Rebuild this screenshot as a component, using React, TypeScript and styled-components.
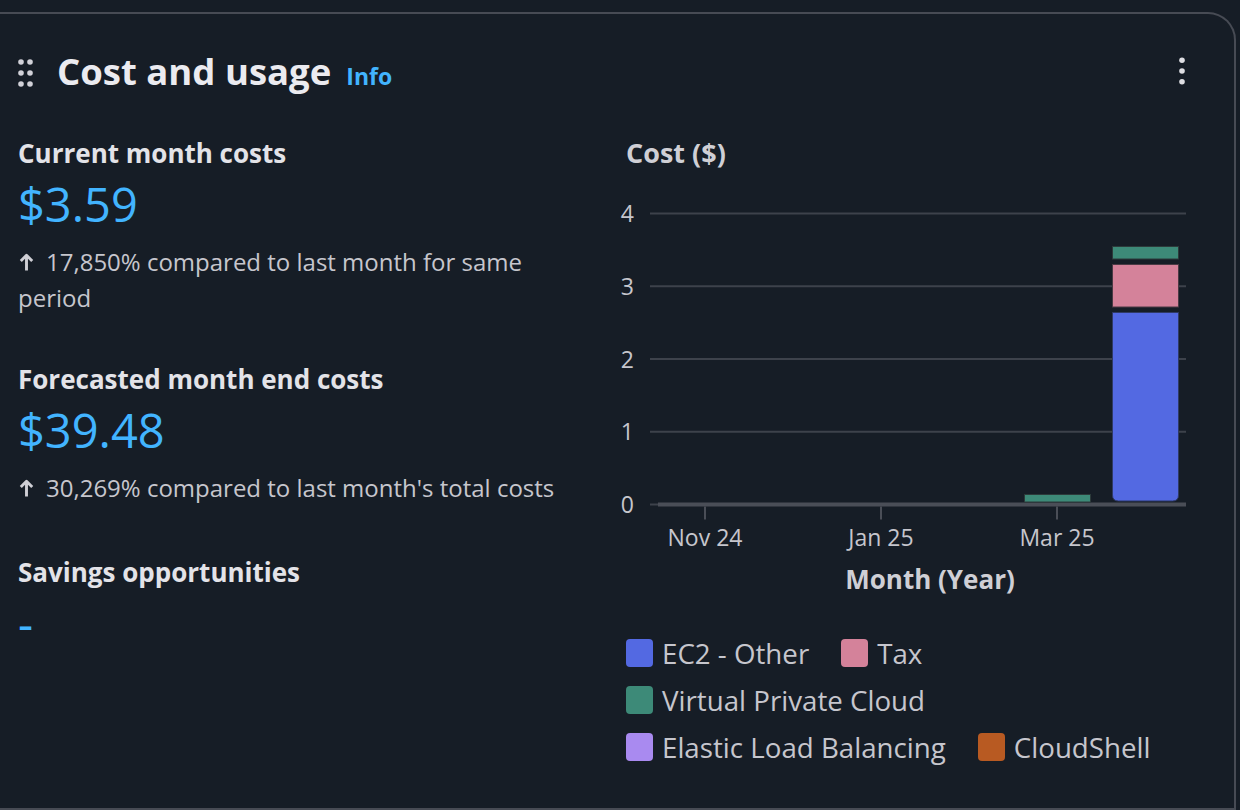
import React from 'react';
import styled, { createGlobalStyle } from 'styled-components';

const GlobalStyle = createGlobalStyle`
  html, body { margin: 0; padding: 0; background: #161d26; }
  body {
    width: 1240px;
    height: 810px;
    overflow: hidden;
    font-family: "Open Sans", "Noto Sans", sans-serif;
  }
  * { box-sizing: border-box; }
`;

const Card = styled.section`
  margin: 12px 4px 0 0;
  height: 798px;
  background: #161d26;
  border: 2px solid #474b54;
  border-left: none;
  border-top-right-radius: 28px;
  padding: 37px 42px 0 18px;
`;

const Header = styled.header`
  display: flex;
  align-items: center;
  justify-content: space-between;
  height: 44px;
`;

const HeaderLeft = styled.div`
  display: flex;
  align-items: center;
`;

const TitleRow = styled.div`
  display: flex;
  align-items: baseline;
  gap: 15px;
`;

const Title = styled.h2`
  margin: 0;
  font-size: 36.5px;
  line-height: 44px;
  font-weight: 700;
  color: #ebebf0;
`;

const InfoLink = styled.a`
  font-size: 23px;
  line-height: 44px;
  font-weight: 700;
  color: #42b4ff;
  text-decoration: none;
`;

const HandleIcon = styled.svg`
  display: block;
  margin: 0 23px 0 0;
  fill: #d1d1d8;
`;

const KebabIcon = styled.svg`
  display: block;
  margin-top: -4px;
  fill: #dedee3;
`;

const Content = styled.div`
  display: grid;
  grid-template-columns: 582px 1fr;
  margin-top: 42px;
`;

const Column = styled.div`
  display: flex;
  flex-direction: column;
`;

const Metric = styled.div<{ $gapTop: number }>`
  display: flex;
  flex-direction: column;
  margin-top: ${p => p.$gapTop}px;
`;

const KeyLabel = styled.div`
  font-size: 26px;
  line-height: 32px;
  font-weight: 700;
  color: #e3e3e8;
`;

const Value = styled.div`
  margin-top: 7px;
  font-size: 47px;
  line-height: 56px;
  font-weight: 400;
  color: #42b4ff;
`;

const Trend = styled.p`
  margin: 12px 0 0;
  font-size: 24px;
  line-height: 36px;
  color: #c6c6cd;
  max-width: 540px;
`;

const ArrowIcon = styled.svg`
  display: inline-block;
  vertical-align: baseline;
  margin: 0 12px 0 1px;
  stroke: #cfcfd5;
  fill: none;
`;

const ChartColumn = styled.div`
  display: flex;
  flex-direction: column;
`;

const ChartTitle = styled.div`
  padding-left: 26px;
  font-size: 27px;
  line-height: 32px;
  font-weight: 700;
  color: #cfcfd5;
`;

const ChartSvg = styled.svg`
  display: block;
  margin-top: 21px;
  text {
    font-family: "Open Sans", "Noto Sans", sans-serif;
    font-size: 23px;
    fill: #c6c6cd;
  }
`;

const AxisTitle = styled.div`
  margin: 3px 0 0 58px;
  width: 544px;
  text-align: center;
  font-size: 26px;
  line-height: 32px;
  font-weight: 700;
  color: #cfcfd5;
`;

const Legend = styled.ul`
  list-style: none;
  margin: 44px 0 0;
  padding: 0 0 0 26px;
  display: flex;
  flex-wrap: wrap;
  column-gap: 32px;
  row-gap: 19px;
`;

const LegendItem = styled.li`
  display: flex;
  align-items: center;
  gap: 9px;
  font-size: 27.7px;
  line-height: 28px;
  color: #c6c6cd;
`;

const Swatch = styled.span<{ $color: string }>`
  width: 27px;
  height: 28px;
  border-radius: 4px;
  background: ${p => p.$color};
  flex: none;
`;

const COLORS = {
  ec2: '#5369e2',
  tax: '#d4829a',
  vpc: '#3d8a78',
  elb: '#a98af0',
  shell: '#b85a22',
};

const Y0 = 314.5;
const UNIT = 72.75;

const DragHandle = () => (
  <HandleIcon width="16" height="28" viewBox="0 0 16 28" aria-hidden>
    {[3, 14, 25].map(y => (
      <React.Fragment key={y}>
        <circle cx="3" cy={y} r="2.8" />
        <circle cx="12" cy={y} r="2.8" />
      </React.Fragment>
    ))}
  </HandleIcon>
);

const Kebab = () => (
  <KebabIcon width="20" height="28" viewBox="0 0 20 28" aria-hidden>
    <circle cx="10" cy="3.25" r="2.8" />
    <circle cx="10" cy="14" r="2.8" />
    <circle cx="10" cy="24.75" r="2.8" />
  </KebabIcon>
);

const Arrow = () => (
  <ArrowIcon width="15" height="18" viewBox="0 0 15 18" aria-hidden>
    <path d="M7.5 17.5V2.3M1.8 8L7.5 2.3 13.2 8" strokeWidth="2.9" strokeLinejoin="round" />
  </ArrowIcon>
);

const Chart = () => {
  const ticks = [
    { x: 105, label: 'Nov 24' },
    { x: 281, label: 'Jan 25' },
    { x: 457, label: 'Mar 25' },
  ];
  const blueTop = 122;
  const blueBottom = 311;
  const bx = 512;
  const bw = 67;
  const r = 6;
  return (
    <ChartSvg width="592" height="370" viewBox="0 0 592 370" aria-label="Cost chart">
      {[0, 1, 2, 3, 4].map(v => (
        <g key={v}>
          <line x1="50" x2="586" y1={Y0 - v * UNIT} y2={Y0 - v * UNIT} stroke="#3d424b" strokeWidth="2" />
          <text x="34" y={Y0 - v * UNIT + 8.5} textAnchor="end">{v}</text>
        </g>
      ))}
      <line x1="58" x2="586" y1={Y0} y2={Y0} stroke="#4a4e57" strokeWidth="4" />
      {ticks.map(t => (
        <g key={t.label}>
          <line x1={t.x} x2={t.x} y1={Y0 + 2} y2={Y0 + 15} stroke="#4a4e57" strokeWidth="2" />
          <text x={t.x} y="356" textAnchor="middle">{t.label}</text>
        </g>
      ))}
      <rect x="424.5" y="304.5" width="66" height="7.5" fill={COLORS.vpc} stroke="#2c3a3a" strokeWidth="1" />
      <rect x={bx + 0.5} y="56.5" width={bw - 1} height="12.5" fill={COLORS.vpc} stroke="#2c3a3a" strokeWidth="1" />
      <rect x={bx + 0.5} y="74.5" width={bw - 1} height="42.5" fill={COLORS.tax} stroke="#4a3a44" strokeWidth="1" />
      <path
        d={`M${bx + 0.5} ${blueTop + 0.5} H${bx + bw - 0.5} V${blueBottom - r} Q${bx + bw - 0.5} ${blueBottom} ${bx + bw - 0.5 - r} ${blueBottom} H${bx + 0.5 + r} Q${bx + 0.5} ${blueBottom} ${bx + 0.5} ${blueBottom - r} Z`}
        fill={COLORS.ec2}
        stroke="#2f3a66"
        strokeWidth="1"
      />
    </ChartSvg>
  );
};

const legend = [
  { name: 'EC2 - Other', color: COLORS.ec2 },
  { name: 'Tax', color: COLORS.tax },
  { name: 'Virtual Private Cloud', color: COLORS.vpc },
  { name: 'Elastic Load Balancing', color: COLORS.elb },
  { name: 'CloudShell', color: COLORS.shell },
];

export default function App() {
  return (
    <>
      <GlobalStyle />
      <Card>
        <Header>
          <HeaderLeft>
            <DragHandle />
            <TitleRow>
              <Title>Cost and usage</Title>
              <InfoLink href="#">Info</InfoLink>
            </TitleRow>
          </HeaderLeft>
          <Kebab />
        </Header>
        <Content>
          <Column>
            <Metric $gapTop={0}>
              <KeyLabel>Current month costs</KeyLabel>
              <Value>$3.59</Value>
              <Trend>
                <Arrow />
                17,850% compared to last month for same period
              </Trend>
            </Metric>
            <Metric $gapTop={47}>
              <KeyLabel>Forecasted month end costs</KeyLabel>
              <Value>$39.48</Value>
              <Trend>
                <Arrow />
                30,269% compared to last month's total costs
              </Trend>
            </Metric>
            <Metric $gapTop={50}>
              <KeyLabel>Savings opportunities</KeyLabel>
              <Value>-</Value>
            </Metric>
          </Column>
          <ChartColumn>
            <ChartTitle>Cost ($)</ChartTitle>
            <Chart />
            <AxisTitle>Month (Year)</AxisTitle>
            <Legend>
              {legend.map(l => (
                <LegendItem key={l.name}>
                  <Swatch $color={l.color} />
                  {l.name}
                </LegendItem>
              ))}
            </Legend>
          </ChartColumn>
        </Content>
      </Card>
    </>
  );
}
